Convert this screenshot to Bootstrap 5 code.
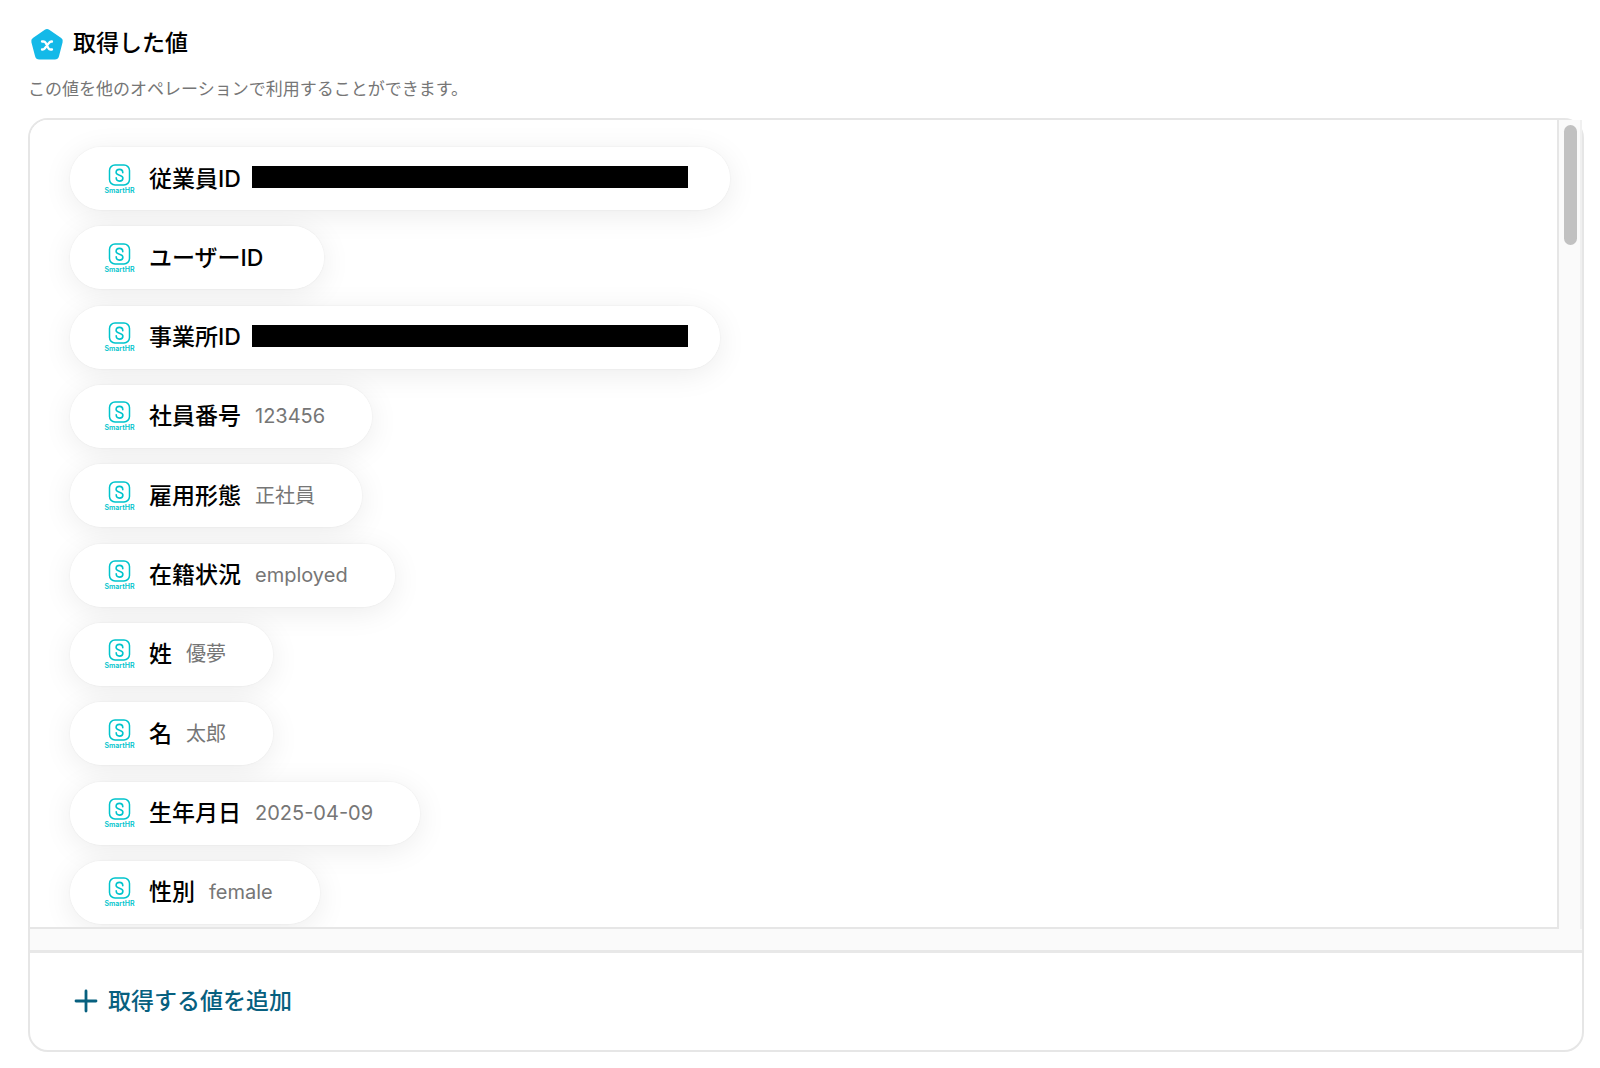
<!DOCTYPE html>
<html lang="ja">
<head>
<meta charset="utf-8">
<meta name="viewport" content="width=device-width, initial-scale=1">
<title>取得した値</title>
<link href="https://cdn.jsdelivr.net/npm/bootstrap@5.3.0/dist/css/bootstrap.min.css" rel="stylesheet">
<style>
  body { font-family: Inter, "Noto Sans CJK JP", sans-serif; color: #000; background: #fff; }
  .page { padding: 23px 16px 16px 28px; }
  .page-title { font-size: 23px; line-height: 40px; font-weight: 500; gap: 9px; }
  .page-title svg { width: 36px; height: 36px; }
  .page-note { font-size: 17px; line-height: 26px; color: #767676; margin: 13px 0 16px; }
  .panel { border: 2px solid #e6e6e6; border-radius: 20px; }
  .scroll-frame { background: #fafafa; border-bottom: 3px solid #e8e8e8; border-radius: 18px 0 0 0; }
  .scroll-view { height: 809px; padding: 27px 40px 3px; overflow: hidden; background: #fff; border: solid #e6e6e6; border-width: 0 2px 2px 0; border-radius: 18px 0 0 0; }
  .value-list { height: 100%; isolation: isolate; }
  .chip { position: relative; height: 63px; padding: 0 47px 0 34px; border-radius: 32px; background: #fff; }
  .chip::before { content: ""; position: absolute; inset: 0; z-index: -1; border-radius: inherit; box-shadow: 0 0 2px rgba(0,0,0,.08), 0 5px 30px rgba(0,0,0,.08); }
  .chip-logo { width: 31px; height: 32px; margin-right: 14px; }
  .chip-name { font-size: 23px; font-weight: 500; line-height: 32px; }
  .chip-value { font-size: 20px; line-height: 32px; color: #767676; margin-left: 14px; min-height: 32px; }
  .chip-masked { padding-right: 42px; }
  .chip-masked-short { padding-right: 32px; }
  .mask { width: 436px; height: 22px; margin: 0 0 3px 11px; background: #000; }
  .scroll-track { width: 23px; padding: 5px; border-right: 2px solid #f0f0f0; }
  .scroll-thumb { width: 13px; height: 120px; border-radius: 7px; background: #c1c1c1; }
  .scroll-gutter { height: 21px; }
  .panel-footer { padding: 28px 44px 29px; }
  .add-btn { font-size: 23px; line-height: 40px; font-weight: 500; color: #07607f; gap: 10px; }
  .add-btn:hover { color: #044a63; }
  .add-btn svg { width: 24px; height: 24px; }
</style>
<script src="https://cdn.jsdelivr.net/npm/bootstrap@5.3.0/dist/js/bootstrap.bundle.min.js"></script>
</head>
<body>
<svg class="d-none" aria-hidden="true">
  <symbol id="smarthr" viewBox="0 0 31 32">
    <rect x="5.500" y="2" width="20" height="20" rx="5.500" fill="none" stroke="#00c4cc" stroke-width="1.500"/>
    <path d="M18.800 9.800c0-2-1.300-3.400-3.300-3.400s-3.400 1.400-3.400 3.200c0 3.100 6.800 2.300 6.800 5.400 0 1.800-1.400 3.100-3.400 3.100s-3.300-1.400-3.300-3.300" fill="none" stroke="#00c4cc" stroke-width="1.600" stroke-linecap="round"/>
    <text x="15.500" y="30.200" text-anchor="middle" font-family="Inter, sans-serif" font-size="7" font-weight="600" fill="#00c4cc">SmartHR</text>
  </symbol>
</svg>
<main class="page">
  <h1 class="page-title d-flex align-items-center mb-0">
    <svg viewBox="0 0 36 36" aria-hidden="true">
      <path d="M16.800 4.800q2.200-1.500 4.400 0l12 8.200q2.200 1.600 1.400 4.200l-3.600 14q-.9 3.300-4.200 3.300H11.300q-3.400 0-4.200-3.300l-3.700-14q-.7-2.600 1.500-4.200z" fill="#14b9e8"/>
      <path d="M14 16.500h1.400q1.500 0 2.200 1.300l2.800 5.400q.7 1.300 2.200 1.300H24M24 16.500q-1.800-.2-2.900 1.300l-4.200 5.400q-1.100 1.500-2.900 1.300" fill="none" stroke="#fff" stroke-width="2.300" stroke-linecap="round" stroke-linejoin="round"/>
    </svg>
    <span>取得した値</span>
  </h1>
  <p class="page-note">この値を他のオペレーションで利用することができます。</p>

  <section class="panel">
    <div class="scroll-frame">
      <div class="d-flex">
        <div class="scroll-view flex-grow-1">
          <ul class="value-list list-unstyled d-flex flex-column justify-content-between align-items-start mb-0">
            <li class="chip chip-masked d-flex align-items-center"><svg class="chip-logo"><use href="#smarthr"/></svg><span class="chip-name">従業員ID</span><span class="mask"></span></li>
            <li class="chip d-flex align-items-center"><svg class="chip-logo"><use href="#smarthr"/></svg><span class="chip-name">ユーザーID</span><span class="chip-value"></span></li>
            <li class="chip chip-masked-short d-flex align-items-center"><svg class="chip-logo"><use href="#smarthr"/></svg><span class="chip-name">事業所ID</span><span class="mask"></span></li>
            <li class="chip d-flex align-items-center"><svg class="chip-logo"><use href="#smarthr"/></svg><span class="chip-name">社員番号</span><span class="chip-value">123456</span></li>
            <li class="chip d-flex align-items-center"><svg class="chip-logo"><use href="#smarthr"/></svg><span class="chip-name">雇用形態</span><span class="chip-value">正社員</span></li>
            <li class="chip d-flex align-items-center"><svg class="chip-logo"><use href="#smarthr"/></svg><span class="chip-name">在籍状況</span><span class="chip-value">employed</span></li>
            <li class="chip d-flex align-items-center"><svg class="chip-logo"><use href="#smarthr"/></svg><span class="chip-name">姓</span><span class="chip-value">優夢</span></li>
            <li class="chip d-flex align-items-center"><svg class="chip-logo"><use href="#smarthr"/></svg><span class="chip-name">名</span><span class="chip-value">太郎</span></li>
            <li class="chip d-flex align-items-center"><svg class="chip-logo"><use href="#smarthr"/></svg><span class="chip-name">生年月日</span><span class="chip-value">2025-04-09</span></li>
            <li class="chip d-flex align-items-center"><svg class="chip-logo"><use href="#smarthr"/></svg><span class="chip-name">性別</span><span class="chip-value">female</span></li>
          </ul>
        </div>
        <div class="scroll-track flex-shrink-0" aria-hidden="true"><div class="scroll-thumb"></div></div>
      </div>
      <div class="scroll-gutter"></div>
    </div>
    <div class="panel-footer">
      <button type="button" class="add-btn btn border-0 p-0 d-inline-flex align-items-center">
        <svg viewBox="0 0 24 24" aria-hidden="true"><path d="M12 2v20M2 12h20" fill="none" stroke="currentColor" stroke-width="2.800" stroke-linecap="round"/></svg>
        <span>取得する値を追加</span>
      </button>
    </div>
  </section>
</main>
</body>
</html>
